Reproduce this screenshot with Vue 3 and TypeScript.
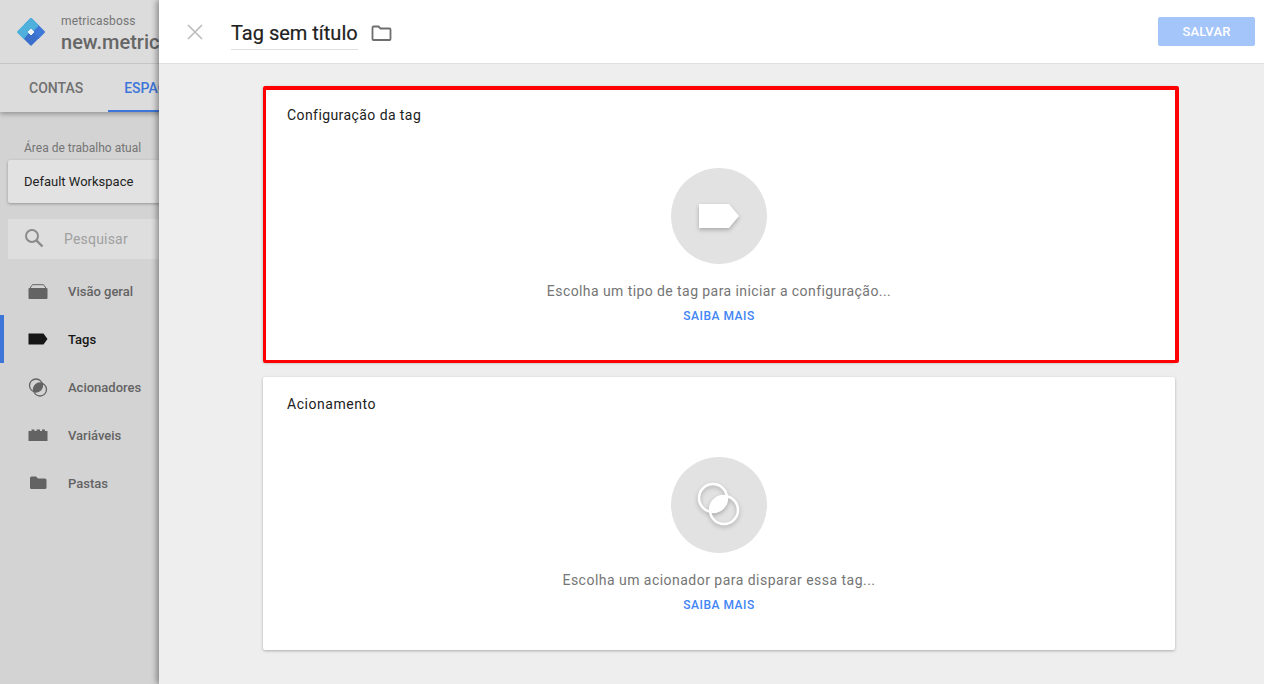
<script setup lang="ts">
interface NavItem { label: string; icon: string; active?: boolean }
const nav: NavItem[] = [
  { label: 'Visão geral', icon: 'overview' },
  { label: 'Tags', icon: 'tag', active: true },
  { label: 'Acionadores', icon: 'trigger' },
  { label: 'Variáveis', icon: 'variable' },
  { label: 'Pastas', icon: 'folder' }
]
</script>

<template>
  <div class="app">
    <aside class="side">
      <header class="side-head">
        <div class="brand">
          <svg class="logo" width="30" height="30" viewBox="0 0 30 30" stroke-linejoin="round">
            <path d="M15 2 28 15 22 21 9 8z" fill="#3f78d6" stroke="#3f78d6" stroke-width="2" />
            <path d="M15 2 21.500 8.500 8.500 21.500 2 15z" fill="#4fb0dc" stroke="#4fb0dc" stroke-width="2" />
            <path d="M9 22 15 28 22 21 18 17H13z" fill="#3a6fcb" stroke="#3a6fcb" stroke-width="1.500" />
            <path d="M15 12 18 15 15 18 12 15z" fill="#eef2f6" stroke="#eef2f6" />
          </svg>
          <div class="brand-text">
            <div class="account">metricasboss</div>
            <div class="container-name">new.metricasboss.com</div>
          </div>
        </div>
        <div class="tabs">
          <span class="tab">CONTAS</span>
          <span class="tab tab-on">ESPAÇO DE TRABALHO</span>
        </div>
      </header>
      <div class="ws-label">Área de trabalho atual</div>
      <div class="ws-box">Default Workspace</div>
      <div class="search">
        <svg width="24" height="24" viewBox="0 0 24 24" fill="none" stroke="#8a8a8a" stroke-width="2">
          <circle cx="10" cy="10" r="6" />
          <path d="m14.500 14.500 6 6" stroke-width="2.400" />
        </svg>
        <span>Pesquisar</span>
      </div>
      <nav class="nav">
        <div v-for="item in nav" :key="item.label" class="nav-row" :class="{ on: item.active }">
          <svg class="nav-icon" width="20" height="20" viewBox="0 0 20 20">
            <template v-if="item.icon === 'overview'">
              <path d="M1.500 8 4 4.200q.3-.5 1-.5h10q.7 0 1 .5L18.500 8" fill="none" stroke="#636363" stroke-width="1" />
              <path d="M.5 8q0-1 1-1h17q1 0 1 1v9q0 1-1 1h-17q-1 0-1-1z" fill="#636363" />
            </template>
            <path v-else-if="item.icon === 'tag'" d="M.5 4.500h15l4 5.500-4 5.500H.5z" fill="#161616" />
            <template v-else-if="item.icon === 'trigger'">
              <circle cx="8" cy="8.500" r="6.500" fill="none" stroke="#636363" stroke-width="1.300" />
              <circle cx="12" cy="12.500" r="6.500" fill="none" stroke="#636363" stroke-width="1.300" />
              <path d="M14.140 6.360A6.500 6.500 0 0 1 5.860 14.640 6.500 6.500 0 0 1 14.140 6.360z" fill="#636363" />
            </template>
            <path v-else-if="item.icon === 'variable'" d="M.5 6h3V4.500h3V6h2V4.500h3.500V6h2V4.500h3V6h2.500v10H.5z" fill="#636363" />
            <path v-else d="M2 5a1.500 1.500 0 0 1 1.500-1.500h4.500l2 2h7a1.500 1.500 0 0 1 1.500 1.500v7.500a1.500 1.500 0 0 1-1.500 1.500h-13A1.500 1.500 0 0 1 2 14.500z" fill="#636363" />
          </svg>
          <span>{{ item.label }}</span>
        </div>
      </nav>
    </aside>

    <section class="panel">
      <header class="panel-head">
        <svg class="close" width="16" height="16" viewBox="0 0 16 16" stroke="#bdbdbd" stroke-width="1.700">
          <path d="m1 1 14 14M15 1 1 15" />
        </svg>
        <div class="title">Tag sem título</div>
        <svg class="folder" width="21" height="18" viewBox="0 0 21 18" fill="none" stroke="#6e6e6e" stroke-width="1.800">
          <path d="M1.500 3.500a1 1 0 0 1 1-1h5l2 2h9a1 1 0 0 1 1 1v9.500a1 1 0 0 1-1 1h-16a1 1 0 0 1-1-1z" />
        </svg>
        <button class="save">SALVAR</button>
      </header>
      <div class="panel-body">
        <article class="card first">
          <h2>Configuração da tag</h2>
          <div class="circle">
            <svg width="48" height="36" viewBox="0 0 48 36" class="glyph">
              <path d="M4 6h30l10 12-10 12H4z" fill="#fff" />
            </svg>
          </div>
          <p>Escolha um tipo de tag para iniciar a configuração...</p>
          <a>SAIBA MAIS</a>
          <div class="highlight"></div>
        </article>
        <article class="card second">
          <h2>Acionamento</h2>
          <div class="circle">
            <svg width="48" height="48" viewBox="0 0 48 48" class="glyph">
              <circle cx="18" cy="17" r="14" fill="none" stroke="#fff" stroke-width="2.500" />
              <circle cx="29" cy="29" r="14" fill="none" stroke="#fff" stroke-width="2.500" />
              <path d="M31.880 15.310A14 14 0 0 1 15.120 30.690 14 14 0 0 1 31.880 15.310z" fill="#fff" />
            </svg>
          </div>
          <p>Escolha um acionador para disparar essa tag...</p>
          <a>SAIBA MAIS</a>
        </article>
      </div>
    </section>
  </div>
</template>

<style>
html, body { margin: 0; padding: 0; overflow: hidden; }
</style>

<style scoped>
.app {
  position: relative;
  width: 1264px;
  height: 684px;
  overflow: hidden;
  background: #d3d3d3;
  font-family: Roboto, "Liberation Sans", sans-serif;
}
.side { width: 159px; height: 684px; overflow: hidden; color: #636363; }
.side-head {
  width: 240px;
  height: 112px;
  background: #dcdcdc;
  box-shadow: 0 2px 5px rgba(0,0,0,.3);
}
.brand {
  height: 64px;
  box-sizing: border-box;
  display: flex;
  align-items: center;
  padding-left: 16px;
  border-bottom: 1px solid #c6c6c6;
}
.logo { flex: none; margin-right: 15px; }
.brand-text { white-space: nowrap; padding-top: 4px; }
.account { font-size: 12px; line-height: 16px; letter-spacing: .15px; color: #757575; }
.container-name { font-size: 20px; line-height: 26px; font-weight: 500; color: #666; }
.tabs { display: flex; height: 48px; white-space: nowrap; }
.tab {
  box-sizing: border-box;
  height: 48px;
  padding: 0 25px 0 29px;
  font-size: 14px;
  font-weight: 500;
  line-height: 49px;
  color: #707070;
}
.tab-on { padding: 0 16px; color: #3d75d8; border-bottom: 2px solid #3d75d8; }
.ws-label { margin: 22px 0 0 24px; font-size: 12px; line-height: 28px; height: 26px; white-space: nowrap; color: #757575; }
.ws-box {
  margin-left: 8px;
  width: 200px;
  height: 43px;
  box-sizing: border-box;
  padding-left: 16px;
  line-height: 43px;
  font-size: 13px;
  background: #e2e2e2;
  border-radius: 2px;
  color: #222;
  white-space: nowrap;
  box-shadow: 0 1px 3px rgba(0,0,0,.3);
}
.search {
  margin: 16px 0 0 8px;
  width: 200px;
  height: 40px;
  display: flex;
  align-items: center;
  background: #dedede;
  padding-left: 14px;
  gap: 18px;
  color: #a0a0a0;
  font-size: 14px;
  letter-spacing: .2px;
}
.search svg { margin-top: -2px; }
.nav { margin-top: 8px; }
.nav-row {
  height: 48px;
  display: flex;
  align-items: center;
  padding-left: 28px;
  gap: 20px;
  font-size: 13px;
  font-weight: 500;
  color: #636363;
  white-space: nowrap;
}
.nav-row.on { color: #161616; box-shadow: inset 4px 0 0 #3d75d8; }
.panel {
  position: absolute;
  left: 159px;
  top: 0;
  width: 1105px;
  height: 684px;
  background: #eee;
  box-shadow: -2px 0 6px rgba(0,0,0,.4);
}
.panel-head {
  height: 64px;
  box-sizing: border-box;
  background: #fff;
  border-bottom: 1px solid #e0e0e0;
  display: flex;
  align-items: center;
  padding-left: 28px;
}
.close { margin-top: 1px; }
.title {
  margin-left: 28px;
  margin-top: 3px;
  height: 33px;
  box-sizing: border-box;
  line-height: 32px;
  font-size: 20px;
  font-weight: 400;
  color: #212121;
  border-bottom: 1px solid #e0e0e0;
  -webkit-text-stroke: .2px #212121;
}
.folder { margin-left: 13px; margin-top: 3px; }
.save {
  margin-left: auto;
  margin-right: 9px;
  width: 97px;
  height: 29px;
  margin-top: -1px;
  border: 0;
  border-radius: 2px;
  background: #a4c5fa;
  color: #fff;
  font: 500 13px Roboto, "Liberation Sans", sans-serif;
  letter-spacing: .2px;
}
.panel-body {
  padding: 22px 0 0 104px;
  display: flex;
  flex-direction: column;
  gap: 15px;
}
.card {
  position: relative;
  width: 912px;
  box-sizing: border-box;
  background: #fff;
  border-radius: 2px;
  box-shadow: 0 1px 3px rgba(0,0,0,.28);
  display: flex;
  flex-direction: column;
  align-items: center;
  padding-top: 19px;
}
.first { height: 276px; }
.second { height: 273px; padding-top: 17px; }
.card h2 {
  align-self: flex-start;
  margin: 0 0 0 24px;
  font-size: 14px;
  line-height: 20px;
  font-weight: 400;
  letter-spacing: .42px;
  color: #212121;
}
.second h2 { letter-spacing: .55px; }
.circle {
  margin-top: 43px;
  width: 96px;
  height: 96px;
  border-radius: 50%;
  background: #e2e2e2;
  display: flex;
  align-items: center;
  justify-content: center;
}
.glyph { filter: drop-shadow(0 2px 2px rgba(0,0,0,.25)); }
.card p {
  margin: 17px 0 0;
  font-size: 14px;
  line-height: 20px;
  letter-spacing: .42px;
  color: #757575;
}
.second p { letter-spacing: .47px; }
.card a {
  margin-top: 7px;
  font-size: 12px;
  line-height: 16px;
  font-weight: 500;
  letter-spacing: .5px;
  color: #4285f4;
}
.highlight {
  position: absolute;
  left: 0;
  top: 0;
  right: -4px;
  bottom: -1px;
  border-style: solid;
  border-color: #f00;
  border-width: 4px 4px 3px 3px;
  border-radius: 2px;
}
</style>
